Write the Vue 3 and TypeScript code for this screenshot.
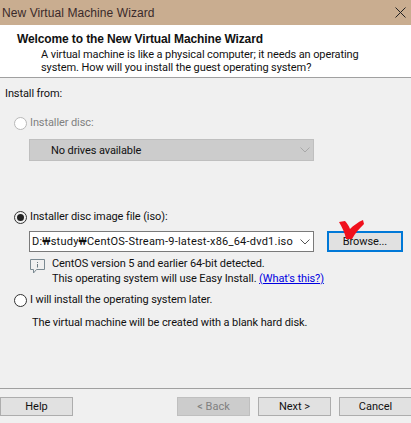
<script setup lang="ts">
const isoPath = 'D:₩study₩CentOS-Stream-9-latest-x86_64-dvd1.iso'
</script>

<template>
  <div class="wizard">
    <div class="titlebar">
      <span class="title-text">New Virtual Machine Wizard</span>
      <svg class="close-icon" width="11" height="11" viewBox="0 0 11 11">
        <path d="M0.5 0.5L10.5 10.5M10.5 0.5L0.5 10.5" stroke="#222" stroke-width="1" fill="none" />
      </svg>
    </div>

    <div class="header">
      <div class="heading">Welcome to the New Virtual Machine Wizard</div>
      <div class="desc">A virtual machine is like a physical computer; it needs an operating</div>
      <div class="desc">system. How will you install the guest operating system?</div>
    </div>

    <div class="body">
      <div class="install-from">Install from:</div>

      <div class="radio-row disabled">
        <span class="radio"></span>
        <span>Installer disc:</span>
      </div>
      <div class="select select-disabled">
        <span class="no-drives">No drives available</span>
        <svg class="chevron" width="10" height="6" viewBox="0 0 10 6">
          <path d="M0.5 0.5L5 5L9.5 0.5" stroke="#a8a8a8" fill="none" />
        </svg>
      </div>

      <div class="radio-row iso-row">
        <span class="radio checked"></span>
        <span>Installer disc image file (iso):</span>
      </div>
      <div class="iso-inputs">
        <div class="select select-iso">
          <span class="iso-path">{{ isoPath }}</span>
          <svg class="chevron" width="10" height="6" viewBox="0 0 10 6">
            <path d="M0.5 0.5L5 5L9.5 0.5" stroke="#555" fill="none" />
          </svg>
        </div>
        <div class="browse">
          <span>Browse...</span>
          <!-- red check mark painted on top of the screenshot -->
          <svg class="check" width="26" height="20" viewBox="0 0 26 20">
            <path d="M0 2L6 1C8 3 10 6 11 9C14 6 19 2 24 0L25 4C21 8 16 13 13 19L7 19C6 13 3 7 0 2Z" fill="#f0101c" />
          </svg>
        </div>
      </div>

      <div class="notice">
        <svg class="info-icon" width="15" height="15" viewBox="0 0 15 15">
          <path d="M0.5 0.5H14.500V10.500H6.500L3.500 14V10.500H0.500Z" fill="#f0f0f0" stroke="#7b8a92" />
          <path d="M7.500 3V4M7.500 5V8.500" stroke="#6a7a82" fill="none" />
        </svg>
        <div class="notice-text">
          <div>CentOS version 5 and earlier 64-bit detected.</div>
          <div>This operating system will use Easy Install. <a class="link">(What's this?)</a></div>
        </div>
      </div>

      <div class="radio-row later-row">
        <span class="radio"></span>
        <span>I will install the operating system later.</span>
      </div>
      <div class="blank-note">The virtual machine will be created with a blank hard disk.</div>
    </div>

    <div class="footer">
      <button class="btn">Help</button>
      <div class="nav-buttons">
        <button class="btn btn-disabled">&lt; Back</button>
        <button class="btn">Next &gt;</button>
        <button class="btn btn-cancel">Cancel</button>
      </div>
    </div>
  </div>
</template>

<style>
html, body {
  margin: 0;
  background: #f0f0f0;
  overflow: hidden;
}
</style>

<style scoped>
.wizard {
  width: 411px;
  height: 423px;
  display: flex;
  flex-direction: column;
  background: #f0f0f0;
  font-family: "Roboto", "Noto Sans CJK KR", sans-serif;
  font-size: 11px;
  letter-spacing: -0.1px;
  color: #111;
  overflow: hidden;
}

.titlebar {
  height: 25px;
  flex: none;
  background: #c9ad90;
  display: flex;
  align-items: center;
  justify-content: space-between;
  padding: 0 5px 0 2px;
  color: #3a2a2a;
  font-family: "Liberation Sans", sans-serif;
  font-size: 12px;
  letter-spacing: 0.08px;
}

.header {
  height: 52px;
  flex: none;
  background: #fff;
  border-bottom: 1px solid #a0a0a0;
  box-sizing: content-box;
  padding-left: 17px;
}

.heading {
  font-weight: 700;
  height: 16px;
  line-height: 16px;
  margin-top: 6px;
  margin-bottom: 1px;
  font-family: "Liberation Sans", sans-serif;
  font-size: 12px;
  letter-spacing: -0.12px;
}

.desc {
  height: 13px;
  line-height: 13px;
  padding-left: 24px;
}

.body {
  flex: 1;
  padding-top: 8px;
}

.install-from {
  height: 16px;
  line-height: 16px;
  padding-left: 5px;
}

.radio-row {
  height: 16px;
  line-height: 16px;
  display: flex;
  align-items: center;
  padding-left: 14px;
  gap: 3px;
  margin-top: 13px;
}

.radio-row.disabled {
  color: #808080;
}

.radio {
  width: 13px;
  height: 13px;
  box-sizing: border-box;
  border: 1px solid #333;
  border-radius: 50%;
  background: #fff;
  display: flex;
  align-items: center;
  justify-content: center;
}

.disabled .radio {
  border-color: #b8b8b8;
}

.radio.checked {
  background: #f0f0f0;
}

.radio.checked::after {
  content: "";
  width: 7px;
  height: 7px;
  border-radius: 50%;
  background: #222;
}

.select {
  margin-left: 29px;
  width: 285px;
  box-sizing: border-box;
  display: flex;
  align-items: center;
  justify-content: space-between;
  padding-right: 3px;
}

.select-disabled {
  height: 22px;
  margin-top: 8px;
  background: #cccccc;
  border: 1px solid #bfbfbf;
}

.no-drives {
  padding-left: 21px;
}

.iso-row {
  margin-top: 48px;
}

.iso-inputs {
  display: flex;
  align-items: center;
  margin-top: 6px;
  gap: 13px;
}

.select-iso {
  height: 21px;
  background: #fff;
  border: 1px solid #7a7a7a;
}

.iso-path {
  padding-left: 2px;
  white-space: nowrap;
  letter-spacing: 0.23px;
}

.browse {
  position: relative;
  width: 76px;
  height: 21px;
  box-sizing: border-box;
  border: 2px solid #0078d7;
  background: #e1e1e1;
  display: flex;
  align-items: center;
  justify-content: center;
}

.check {
  position: absolute;
  left: 10px;
  top: -13px;
}

.notice {
  display: flex;
  margin-top: 4px;
  margin-left: 30px;
  gap: 7px;
}

.info-icon {
  margin-top: 3px;
}

.notice-text {
  line-height: 15px;
}

.link {
  color: #0000e0;
  text-decoration: underline;
}

.later-row {
  margin-top: 6px;
}

.blank-note {
  margin-top: 7px;
  padding-left: 32px;
  height: 16px;
  line-height: 16px;
}

.footer {
  margin-top: auto;
  flex: none;
  border-top: 1px solid #a0a0a0;
  display: flex;
  justify-content: space-between;
  padding-top: 8px;
  box-sizing: border-box;
  height: 35px;
}

.nav-buttons {
  display: flex;
  gap: 8px;
  margin-right: -1px;
}

.btn {
  width: 73px;
  height: 19px;
  box-sizing: border-box;
  padding: 0;
  border: 1px solid #adadad;
  background: #e1e1e1;
  font: inherit;
  color: #111;
}

.btn-disabled {
  background: #cccccc;
  border-color: #bfbfbf;
  color: #808080;
}
</style>
